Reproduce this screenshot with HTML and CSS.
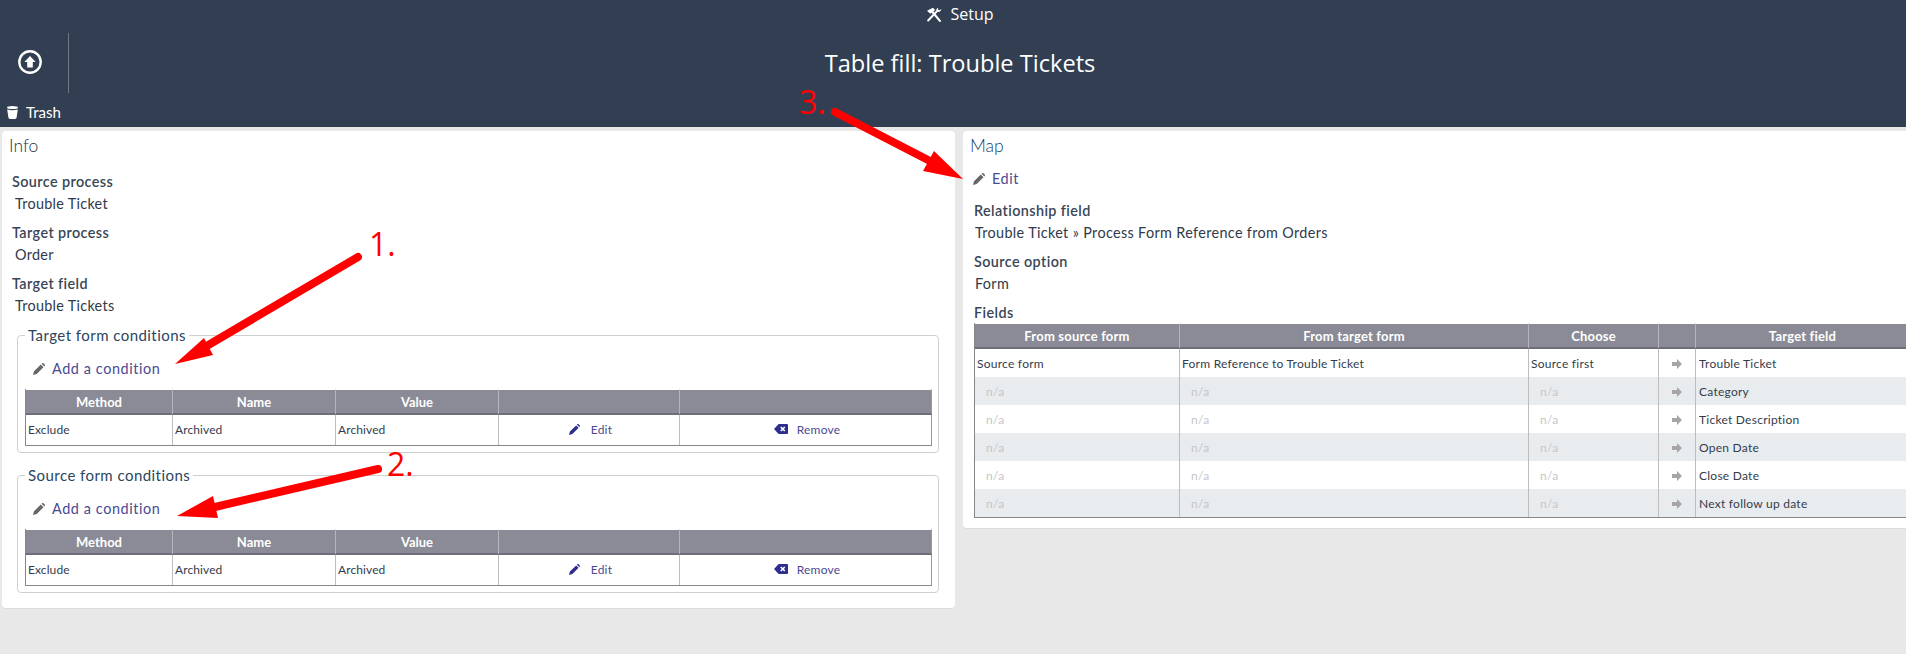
FILE: index.html
```html
<!DOCTYPE html>
<html lang="en">
<head>
    <meta charset="UTF-8">
    <meta name="viewport" content="width=device-width, initial-scale=1.0">
    <title>Table fill: Trouble Tickets</title>
    <link rel="stylesheet" href="styles.css">
</head>
<body>
    <svg class="icon-defs" width="0" height="0">
        <symbol id="i-pencil" viewBox="0 0 12 12">
            <path d="M0 12 L1 8.3 L7.8 1.5 L10.5 4.2 L3.7 11 Z M8.6 .7 L9.3 .1 Q9.9 -.2 10.4 .2 L11.8 1.6 Q12.2 2.1 11.8 2.7 L11.3 3.4 Z"/>
        </symbol>
        <symbol id="i-remove" viewBox="0 0 14 10">
            <path d="M0 5 L4.4 .3 Q4.7 0 5 0 H13 Q14 0 14 1 V9 Q14 10 13 10 H5 Q4.7 10 4.4 9.7 Z"/>
            <path d="M6.8 3 L10.8 7 M10.8 3 L6.8 7" stroke="#fff" stroke-width="1.6" fill="none"/>
        </symbol>
        <symbol id="i-arrow" viewBox="0 0 10 10">
            <path d="M0 3 H5 V0 L10 5 L5 10 V7 H0 Z"/>
        </symbol>
    </svg>

    <div class="page">
        <header class="topbar">
            <div class="setup">
                <svg class="setup-icon" viewBox="0 0 15 14" width="16" height="15">
                    <path d="M13 13 L5.5 4" stroke="#fff" stroke-width="2" stroke-linecap="round" fill="none"/>
                    <path d="M1 3.6 L6.5 .6 L8.6 2.8 L4 6.4 Z" fill="#fff"/>
                    <path d="M2 12.6 L9.8 4.4" stroke="#fff" stroke-width="1.8" stroke-linecap="round" fill="none"/>
                    <path d="M11.4 .6 Q9 1.8 9.8 4.2 Q12 5.4 14 3.2 L14.4 1.8 L12.6 3 L11.2 2.2 Z" fill="#fff"/>
                </svg>
                <span>Setup</span>
            </div>
            <div class="title-row">
                <div class="back-cell">
                    <svg viewBox="0 0 24 24" width="24" height="24">
                        <circle cx="12" cy="12" r="10.7" fill="none" stroke="#fff" stroke-width="2.4"/>
                        <path d="M12 6 L17.6 12 H14.8 V17.4 H9.2 V12 H6.4 Z" fill="#fff"/>
                    </svg>
                </div>
                <h1>Table fill: Trouble Tickets</h1>
            </div>
            <div class="trash">
                <svg viewBox="0 0 11 13" width="11" height="13">
                    <ellipse cx="5.5" cy="1.5" rx="5.5" ry="1.5" fill="#fff"/>
                    <path d="M.2 3.4 Q5.5 5 10.8 3.4 L9.6 11.6 Q9.4 13 8 13 H3 Q1.6 13 1.4 11.6 Z" fill="#fff"/>
                </svg>
                <span>Trash</span>
            </div>
        </header>

        <main class="columns">
            <section class="card">
                <h2 class="card-title">Info</h2>
                <div class="field">
                    <div class="field-label">Source process</div>
                    <div class="field-value">Trouble Ticket</div>
                </div>
                <div class="field">
                    <div class="field-label">Target process</div>
                    <div class="field-value">Order</div>
                </div>
                <div class="field">
                    <div class="field-label">Target field</div>
                    <div class="field-value">Trouble Tickets</div>
                </div>

                <fieldset class="conditions">
                    <legend>Target form conditions</legend>
                    <a class="add-link"><svg class="pencil-grey"><use href="#i-pencil"/></svg>Add a condition</a>
                    <table class="grid cond-table">
                        <thead>
                            <tr>
                                <th class="w-method">Method</th>
                                <th class="w-name">Name</th>
                                <th class="w-name">Value</th>
                                <th class="w-edit"></th>
                                <th></th>
                            </tr>
                        </thead>
                        <tbody>
                            <tr>
                                <td>Exclude</td>
                                <td>Archived</td>
                                <td>Archived</td>
                                <td class="action"><a><svg class="pencil-blue"><use href="#i-pencil"/></svg>Edit</a></td>
                                <td class="action"><a><svg class="remove-icon"><use href="#i-remove"/></svg>Remove</a></td>
                            </tr>
                        </tbody>
                    </table>
                </fieldset>

                <fieldset class="conditions">
                    <legend>Source form conditions</legend>
                    <a class="add-link"><svg class="pencil-grey"><use href="#i-pencil"/></svg>Add a condition</a>
                    <table class="grid cond-table">
                        <thead>
                            <tr>
                                <th class="w-method">Method</th>
                                <th class="w-name">Name</th>
                                <th class="w-name">Value</th>
                                <th class="w-edit"></th>
                                <th></th>
                            </tr>
                        </thead>
                        <tbody>
                            <tr>
                                <td>Exclude</td>
                                <td>Archived</td>
                                <td>Archived</td>
                                <td class="action"><a><svg class="pencil-blue"><use href="#i-pencil"/></svg>Edit</a></td>
                                <td class="action"><a><svg class="remove-icon"><use href="#i-remove"/></svg>Remove</a></td>
                            </tr>
                        </tbody>
                    </table>
                </fieldset>
            </section>

            <section class="card card-map">
                <h2 class="card-title map-title">Map</h2>
                <a class="add-link map-edit"><svg class="pencil-grey"><use href="#i-pencil"/></svg>Edit</a>
                <div class="field">
                    <div class="field-label">Relationship field</div>
                    <div class="field-value">Trouble Ticket » Process Form Reference from Orders</div>
                </div>
                <div class="field">
                    <div class="field-label">Source option</div>
                    <div class="field-value">Form</div>
                </div>
                <div class="field-label fields-label">Fields</div>
                <table class="grid map-table">
                    <thead>
                        <tr>
                            <th class="w-source">From source form</th>
                            <th class="w-target">From target form</th>
                            <th class="w-choose">Choose</th>
                            <th class="w-arrow"></th>
                            <th>Target field</th>
                        </tr>
                    </thead>
                    <tbody>
                        <tr>
                            <td>Source form</td>
                            <td>Form Reference to Trouble Ticket</td>
                            <td>Source first</td>
                            <td class="arrow-cell"><svg class="arrow-icon"><use href="#i-arrow"/></svg></td>
                            <td>Trouble Ticket</td>
                        </tr>
                        <tr>
                            <td class="na">n/a</td>
                            <td class="na">n/a</td>
                            <td class="na">n/a</td>
                            <td class="arrow-cell"><svg class="arrow-icon"><use href="#i-arrow"/></svg></td>
                            <td>Category</td>
                        </tr>
                        <tr>
                            <td class="na">n/a</td>
                            <td class="na">n/a</td>
                            <td class="na">n/a</td>
                            <td class="arrow-cell"><svg class="arrow-icon"><use href="#i-arrow"/></svg></td>
                            <td>Ticket Description</td>
                        </tr>
                        <tr>
                            <td class="na">n/a</td>
                            <td class="na">n/a</td>
                            <td class="na">n/a</td>
                            <td class="arrow-cell"><svg class="arrow-icon"><use href="#i-arrow"/></svg></td>
                            <td>Open Date</td>
                        </tr>
                        <tr>
                            <td class="na">n/a</td>
                            <td class="na">n/a</td>
                            <td class="na">n/a</td>
                            <td class="arrow-cell"><svg class="arrow-icon"><use href="#i-arrow"/></svg></td>
                            <td>Close Date</td>
                        </tr>
                        <tr>
                            <td class="na">n/a</td>
                            <td class="na">n/a</td>
                            <td class="na">n/a</td>
                            <td class="arrow-cell"><svg class="arrow-icon"><use href="#i-arrow"/></svg></td>
                            <td>Next follow up date</td>
                        </tr>
                    </tbody>
                </table>
            </section>
        </main>
    </div>

    <!-- red markup drawn over the screenshot -->
    <svg class="annotations" viewBox="0 0 1906 654" width="1906" height="654">
        <g class="mark">
            <path d="M358 257 L205 347"/>
            <path d="M378 469 L215 507"/>
            <path d="M835 112 L930 161"/>
        </g>
        <g class="mark-head">
            <polygon points="175,364 204,338 213,355"/>
            <polygon points="177,516 213,496 218,518"/>
            <polygon points="963,179 934,151 923,171"/>
        </g>
        <text class="mark-num" x="369" y="256">1.</text>
        <text class="mark-num" x="387" y="476">2.</text>
        <text class="mark-num" x="799" y="114">3.</text>
    </svg>
</body>
</html>
```

FILE: styles.css
```css
html {
    overflow: hidden;
}

body {
    margin: 0;
    height: 654px;
    overflow: hidden;
    background: #e8e8e8;
    font-family: "Lato", Arial, sans-serif;
    font-size: 14.4px;
    color: #2f3a4a;
    position: relative;
}

.icon-defs {
    position: absolute;
}

.page {
    width: 1920px;
}

/* top bar */
.topbar {
    background: #323f52;
    color: white;
    height: 127px;
    font-family: "Open Sans", Arial, sans-serif;
}

.setup {
    height: 33px;
    padding-bottom: 5px;
    box-sizing: border-box;
    display: flex;
    align-items: center;
    justify-content: center;
    gap: 8px;
    font-size: 16px;
}

.title-row {
    height: 60px;
    display: grid;
    grid-template-columns: 69px 1fr 69px;
    align-items: center;
}

.back-cell {
    height: 60px;
    border-right: 1px solid #6f7885;
    display: flex;
    align-items: center;
    justify-content: center;
    padding: 0 8px 2px 0;
    box-sizing: border-box;
}

.title-row h1 {
    margin: 0 0 1px;
    font-size: 23.6px;
    font-weight: 400;
    text-align: center;
}

.trash {
    display: flex;
    align-items: center;
    gap: 8px;
    padding: 10px 0 0 7px;
    font-family: "Lato", Arial, sans-serif;
    font-size: 15px;
}

/* columns */
.columns {
    display: grid;
    grid-template-columns: 953px 953px;
    gap: 8px;
    align-items: start;
    padding: 4px 0 0 2px;
}

.card {
    background: white;
    border-radius: 4px;
    border-bottom: 1px solid #dcdcdc;
    padding: 3px 0 15px;
    box-sizing: border-box;
}

.card-map {
    padding: 3px 0 10px 11px;
}

.card-title {
    margin: 0 0 13px 7px;
    font-size: 17.5px;
    line-height: 24px;
    font-weight: 300;
    color: #27303e;
}

.map-title {
    margin: 0 0 10px -4px;
    color: #124069;
}

.field {
    margin: 0 0 7px 10px;
}

.card-map .field {
    margin-left: 0;
}

.field-label {
    line-height: 22px;
    font-weight: 600;
    letter-spacing: .4px;
    color: #3a4656;
}

.field-value {
    line-height: 22px;
    padding-left: 3px;
    letter-spacing: .3px;
    color: #2f3a4a;
}

.card-map .field-value {
    padding-left: 1px;
    letter-spacing: .35px;
}

.fields-label {
    margin-bottom: -1px;
}

/* condition boxes */
.conditions {
    width: 922px;
    margin: 7px 0 11px 15px;
    padding: 0 6px 6px 7px;
    box-sizing: border-box;
    border: 1px solid #cfcfcf;
    border-radius: 4px;
    min-inline-size: 0;
}

.conditions + .conditions {
    margin-top: 0;
    margin-bottom: 0;
}

.conditions legend {
    padding: 0 3px;
    font-size: 15px;
    line-height: 22px;
    letter-spacing: .45px;
    color: #2b4560;
}

.add-link {
    display: flex;
    align-items: center;
    gap: 7px;
    margin: 12px 0 9px 8px;
    line-height: 22px;
    letter-spacing: .6px;
    color: #4a4a94;
}

.map-edit {
    margin: 0 0 10px -1px;
}

.pencil-grey {
    width: 12px;
    height: 12px;
    fill: #666;
}

.pencil-blue {
    width: 11px;
    height: 11px;
    fill: #2e2e8f;
    margin-right: 11px;
}

.remove-icon {
    width: 14px;
    height: 10px;
    fill: #2e2e8f;
    margin-right: 9px;
}

/* tables */
.grid {
    border-collapse: separate;
    border-spacing: 0;
    table-layout: fixed;
    font-size: 12px;
    border-bottom: 1px solid #868686;
    border-left: 1px solid #868686;
}

.grid th {
    height: 23px;
    padding: 0;
    background: #8a8b96;
    background-clip: padding-box;
    border-top: 1px solid transparent;
    border-right: 1px solid #b4b4ba;
    border-bottom: 2px solid #6d6e78;
    color: white;
    font-weight: 700;
    font-size: 13px;
}

.grid td {
    padding: 0 3px 0 2px;
    border-right: 1px solid #bdbdbd;
    letter-spacing: .1px;
    color: #333c4a;
}

.cond-table {
    width: 907px;
}

.cond-table td {
    height: 29px;
    padding-bottom: 1px;
}

.cond-table td:last-child,
.cond-table th:last-child {
    border-right-color: #9a9a9a;
}

.map-table {
    width: 936px;
}

.map-table th {
    letter-spacing: .2px;
}

.map-table td {
    height: 28px;
    letter-spacing: .25px;
}

.map-table td:last-child {
    padding-left: 3px;
}

.map-table tbody tr:nth-child(even) td {
    background: #e9ecef;
}

.map-table .na {
    padding-left: 11px;
    color: #c4c6c8;
}

.w-method { width: 146px; }
.w-name { width: 162px; }
.w-edit { width: 180px; }
.w-source { width: 204px; }
.w-target { width: 348px; }
.w-choose { width: 129px; }
.w-arrow { width: 36px; }

.grid td.action {
    text-align: center;
    padding-left: 6px;
}

.action a {
    display: inline-flex;
    align-items: center;
    color: #4a4a94;
    letter-spacing: .2px;
}

.arrow-cell {
    text-align: center;
}

.arrow-icon {
    width: 10px;
    height: 10px;
    fill: #a8a4a4;
    vertical-align: middle;
}

/* annotations */
.annotations {
    position: absolute;
    top: 0;
    left: 0;
    pointer-events: none;
}

.mark path {
    stroke: #ff0000;
    stroke-width: 8;
    stroke-linecap: round;
    fill: none;
}

.mark-head polygon {
    fill: #ff0000;
}

.mark-num {
    font-family: "Open Sans", Arial, sans-serif;
    font-size: 32px;
    fill: #ff0000;
}
```
